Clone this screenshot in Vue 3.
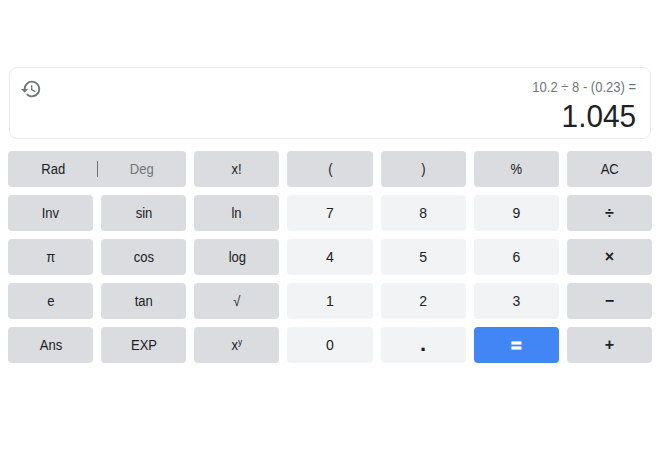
<script setup>
const keys = [
  { label: 'x!', kind: 'fn' }, { label: '(', kind: 'fn' }, { label: ')', kind: 'fn' }, { label: '%', kind: 'fn' }, { label: 'AC', kind: 'fn' },
  { label: 'Inv', kind: 'fn' }, { label: 'sin', kind: 'fn' }, { label: 'ln', kind: 'fn' },
  { label: '7', kind: 'digit' }, { label: '8', kind: 'digit' }, { label: '9', kind: 'digit' }, { label: '÷', kind: 'op' },
  { label: 'π', kind: 'fn' }, { label: 'cos', kind: 'fn' }, { label: 'log', kind: 'fn' },
  { label: '4', kind: 'digit' }, { label: '5', kind: 'digit' }, { label: '6', kind: 'digit' }, { label: '×', kind: 'op' },
  { label: 'e', kind: 'fn' }, { label: 'tan', kind: 'fn' }, { label: '√', kind: 'fn' },
  { label: '1', kind: 'digit' }, { label: '2', kind: 'digit' }, { label: '3', kind: 'digit' }, { label: '−', kind: 'op' },
  { label: 'Ans', kind: 'fn' }, { label: 'EXP', kind: 'fn' }, { label: 'x', sup: 'y', kind: 'fn' },
  { label: '0', kind: 'digit' }, { label: '.', kind: 'dot' }, { label: '=', kind: 'equals' }, { label: '+', kind: 'op' },
]
</script>

<template>
  <main class="calculator">
    <section class="display">
      <svg class="history" viewBox="0 0 24 24" aria-hidden="true">
        <path d="M13 3a9 9 0 0 0-9 9H1l3.89 3.89.07.14L9 12H6a7 7 0 1 1 2.06 4.94l-1.42 1.42A9 9 0 1 0 13 3zm-1 5v5l4.28 2.54.72-1.21-3.5-2.08V8H12z" />
      </svg>
      <div class="readout">
        <div class="expression">10.2 ÷ 8 - (0.23) =</div>
        <div class="result">1.045</div>
      </div>
    </section>
    <section class="keypad">
      <div class="key fn angle">
        <span class="mode">Rad</span>
        <span class="divider"></span>
        <span class="mode inactive">Deg</span>
      </div>
      <div v-for="key in keys" :key="key.label" class="key" :class="key.kind">
        <span class="label">{{ key.label }}<sup v-if="key.sup">{{ key.sup }}</sup></span>
      </div>
    </section>
  </main>
</template>

<style>
body {
  background: #fff;
}
</style>

<style scoped>
.calculator {
  padding: 67px 8px 0;
  font-family: "Liberation Sans", Arial, sans-serif;
  color: #202124;
}
.display {
  display: flex;
  justify-content: space-between;
  box-sizing: border-box;
  height: 72px;
  margin: 0 1px 12px;
  padding: 10px 14px 0 10px;
  border: 1px solid #e8eaed;
  border-radius: 8px;
}
.history {
  width: 22px;
  height: 22px;
  fill: #70757a;
}
.readout {
  text-align: right;
}
.expression {
  font-size: 14px;
  line-height: 18px;
  color: #70757a;
  transform-origin: right;
  transform: translateX(0.5px) scaleX(0.93);
}
.result {
  font-size: 31px;
  line-height: 42px;
  transform-origin: right;
  transform: translateX(0.5px) scaleX(0.96);
}
.keypad {
  display: grid;
  grid-template-columns: repeat(7, 1fr);
  grid-auto-rows: 36px;
  gap: 8px;
}
.key {
  display: flex;
  align-items: center;
  justify-content: center;
  min-width: 0;
  border-radius: 4px;
  background: #dadce0;
  font-size: 14px;
  line-height: 34px;
}
.angle {
  grid-column: span 2;
}
.mode {
  flex: 1;
  text-align: center;
  transform: translateX(1px) scaleX(0.93);
}
.fn .label {
  transform: scaleX(0.93);
}
.mode.inactive {
  color: #70757a;
  transform: translateX(-0.5px) scaleX(0.93);
}
.divider {
  width: 1px;
  height: 16px;
  background: #70757a;
}
.digit,
.dot {
  background: #f1f3f4;
}
.op {
  font-size: 16px;
  font-weight: bold;
}
.dot {
  font-size: 22px;
  font-weight: bold;
}
.dot .label {
  transform: translateY(-1.5px);
}
.equals {
  background: #4285f4;
  color: #fff;
  font-size: 18px;
  font-weight: bold;
  -webkit-text-stroke: 0.9px #fff;
}
.equals .label {
  transform: translateY(0.5px);
}
sup {
  font-size: 9px;
  line-height: 0;
  vertical-align: 5px;
}
</style>
